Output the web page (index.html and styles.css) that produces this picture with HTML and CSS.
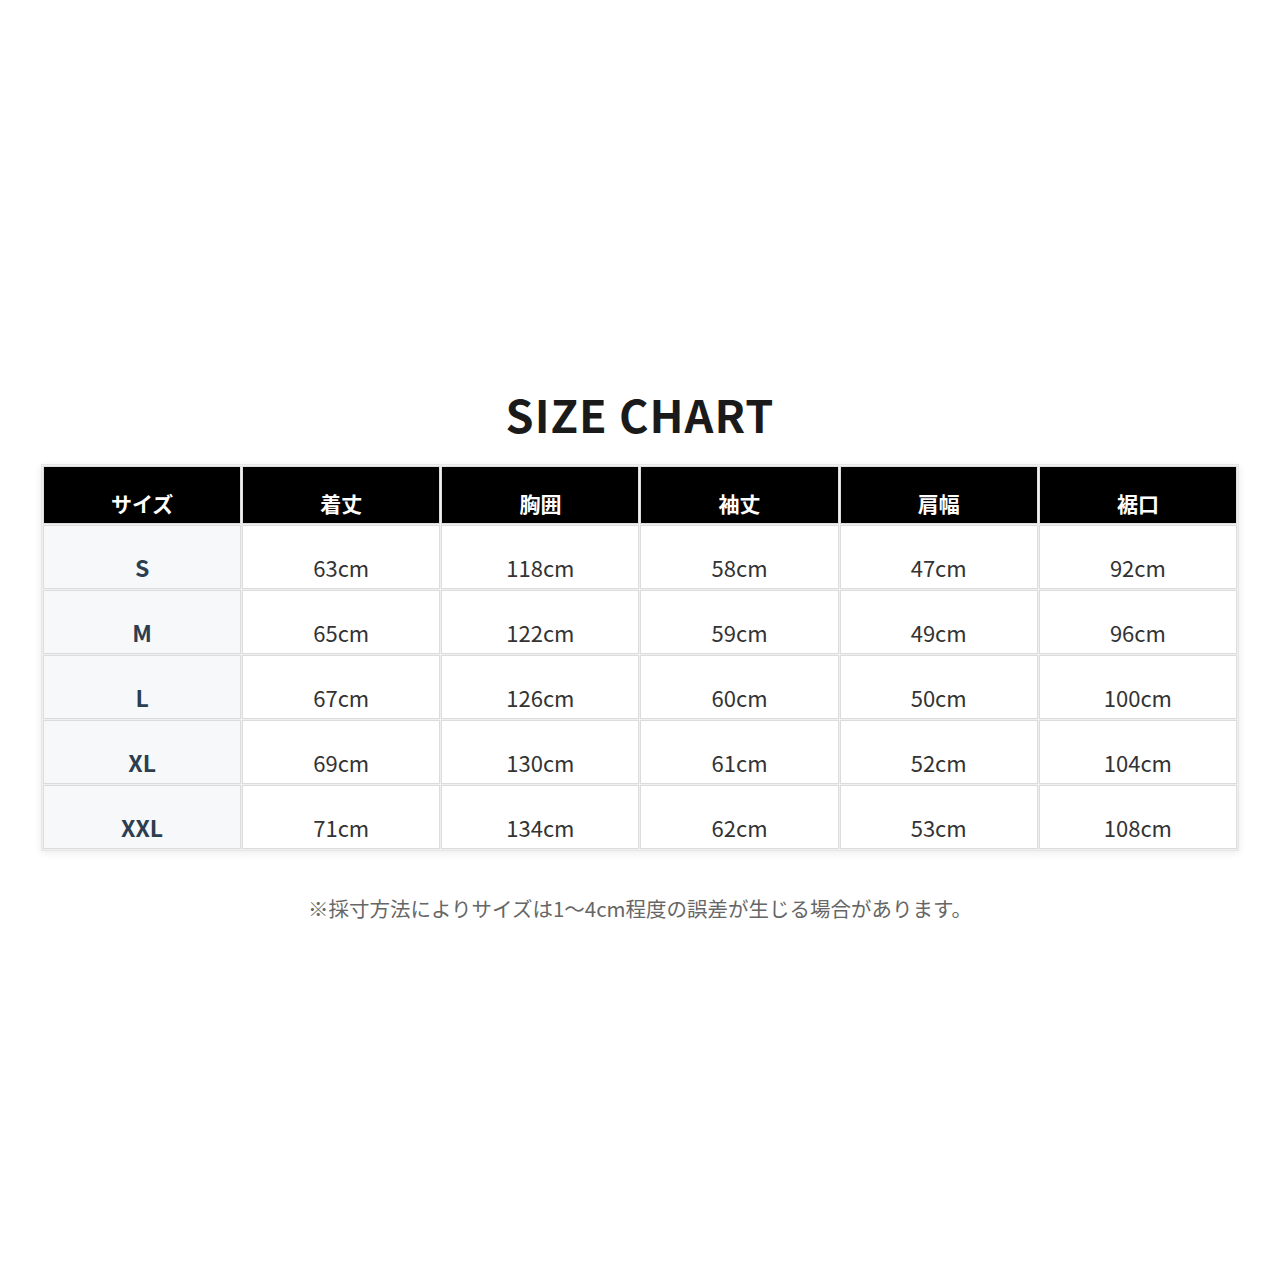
FILE: index.html
```html
<!DOCTYPE html>
<html lang="ja">
<head>
<meta charset="utf-8">
<link rel="stylesheet" href="styles.css">
</head>
<body>
<main class="page">
  <h1 class="title">SIZE CHART</h1>
  <table class="chart">
    <thead>
      <tr><th>サイズ</th><th>着丈</th><th>胸囲</th><th>袖丈</th><th>肩幅</th><th>裾口</th></tr>
    </thead>
    <tbody>
      <tr><td class="size">S</td><td>63cm</td><td>118cm</td><td>58cm</td><td>47cm</td><td>92cm</td></tr>
      <tr><td class="size">M</td><td>65cm</td><td>122cm</td><td>59cm</td><td>49cm</td><td>96cm</td></tr>
      <tr><td class="size">L</td><td>67cm</td><td>126cm</td><td>60cm</td><td>50cm</td><td>100cm</td></tr>
      <tr><td class="size">XL</td><td>69cm</td><td>130cm</td><td>61cm</td><td>52cm</td><td>104cm</td></tr>
      <tr><td class="size">XXL</td><td>71cm</td><td>134cm</td><td>62cm</td><td>53cm</td><td>108cm</td></tr>
    </tbody>
  </table>
  <p class="note">※採寸方法によりサイズは1～4cm程度の誤差が生じる場合があります。</p>
</main>
</body>
</html>
```

FILE: styles.css
```css
html, body {
  margin: 0;
  padding: 0;
  background: #ffffff;
}
body {
  font-family: "Noto Sans CJK JP", "Noto Sans", sans-serif;
  color: #333333;
}
.page {
  width: 1198px;
  margin: 0 auto;
  padding-top: 384px;
  display: flex;
  flex-direction: column;
  align-items: center;
}
.title {
  margin: 0;
  font-size: 45px;
  font-weight: 700;
  letter-spacing: 1px;
  line-height: 60px;
  color: #1a1a1a;
}
.chart {
  margin-top: 20px;
  width: 1198px;
  border-collapse: separate;
  border-spacing: 1px;
  background: #f0f0f0;
  border: 1px solid #e6e6e6;
  box-shadow: 0 2px 8px rgba(0, 0, 0, 0.08);
  table-layout: fixed;
}
.chart th {
  background: #000000;
  color: #ffffff;
  font-size: 21px;
  font-weight: 700;
  height: 58px;
  padding: 16px 0 0;
  box-sizing: border-box;
  border: 1px solid #dcdcdc;
  line-height: 1;
}
.chart td {
  background: #ffffff;
  border: 1px solid #dcdcdc;
  height: 64px;
  box-sizing: border-box;
  padding: 20px 0 0;
  text-align: center;
  font-size: 22px;
  line-height: 1;
  color: #333333;
}
.chart td.size {
  background: #f6f8fa;
  color: #2c3e50;
  font-weight: 700;
  font-size: 23px;
}
.note {
  margin: 47px 0 0;
  font-size: 20.5px;
  color: #666666;
  line-height: 1;
}
```
